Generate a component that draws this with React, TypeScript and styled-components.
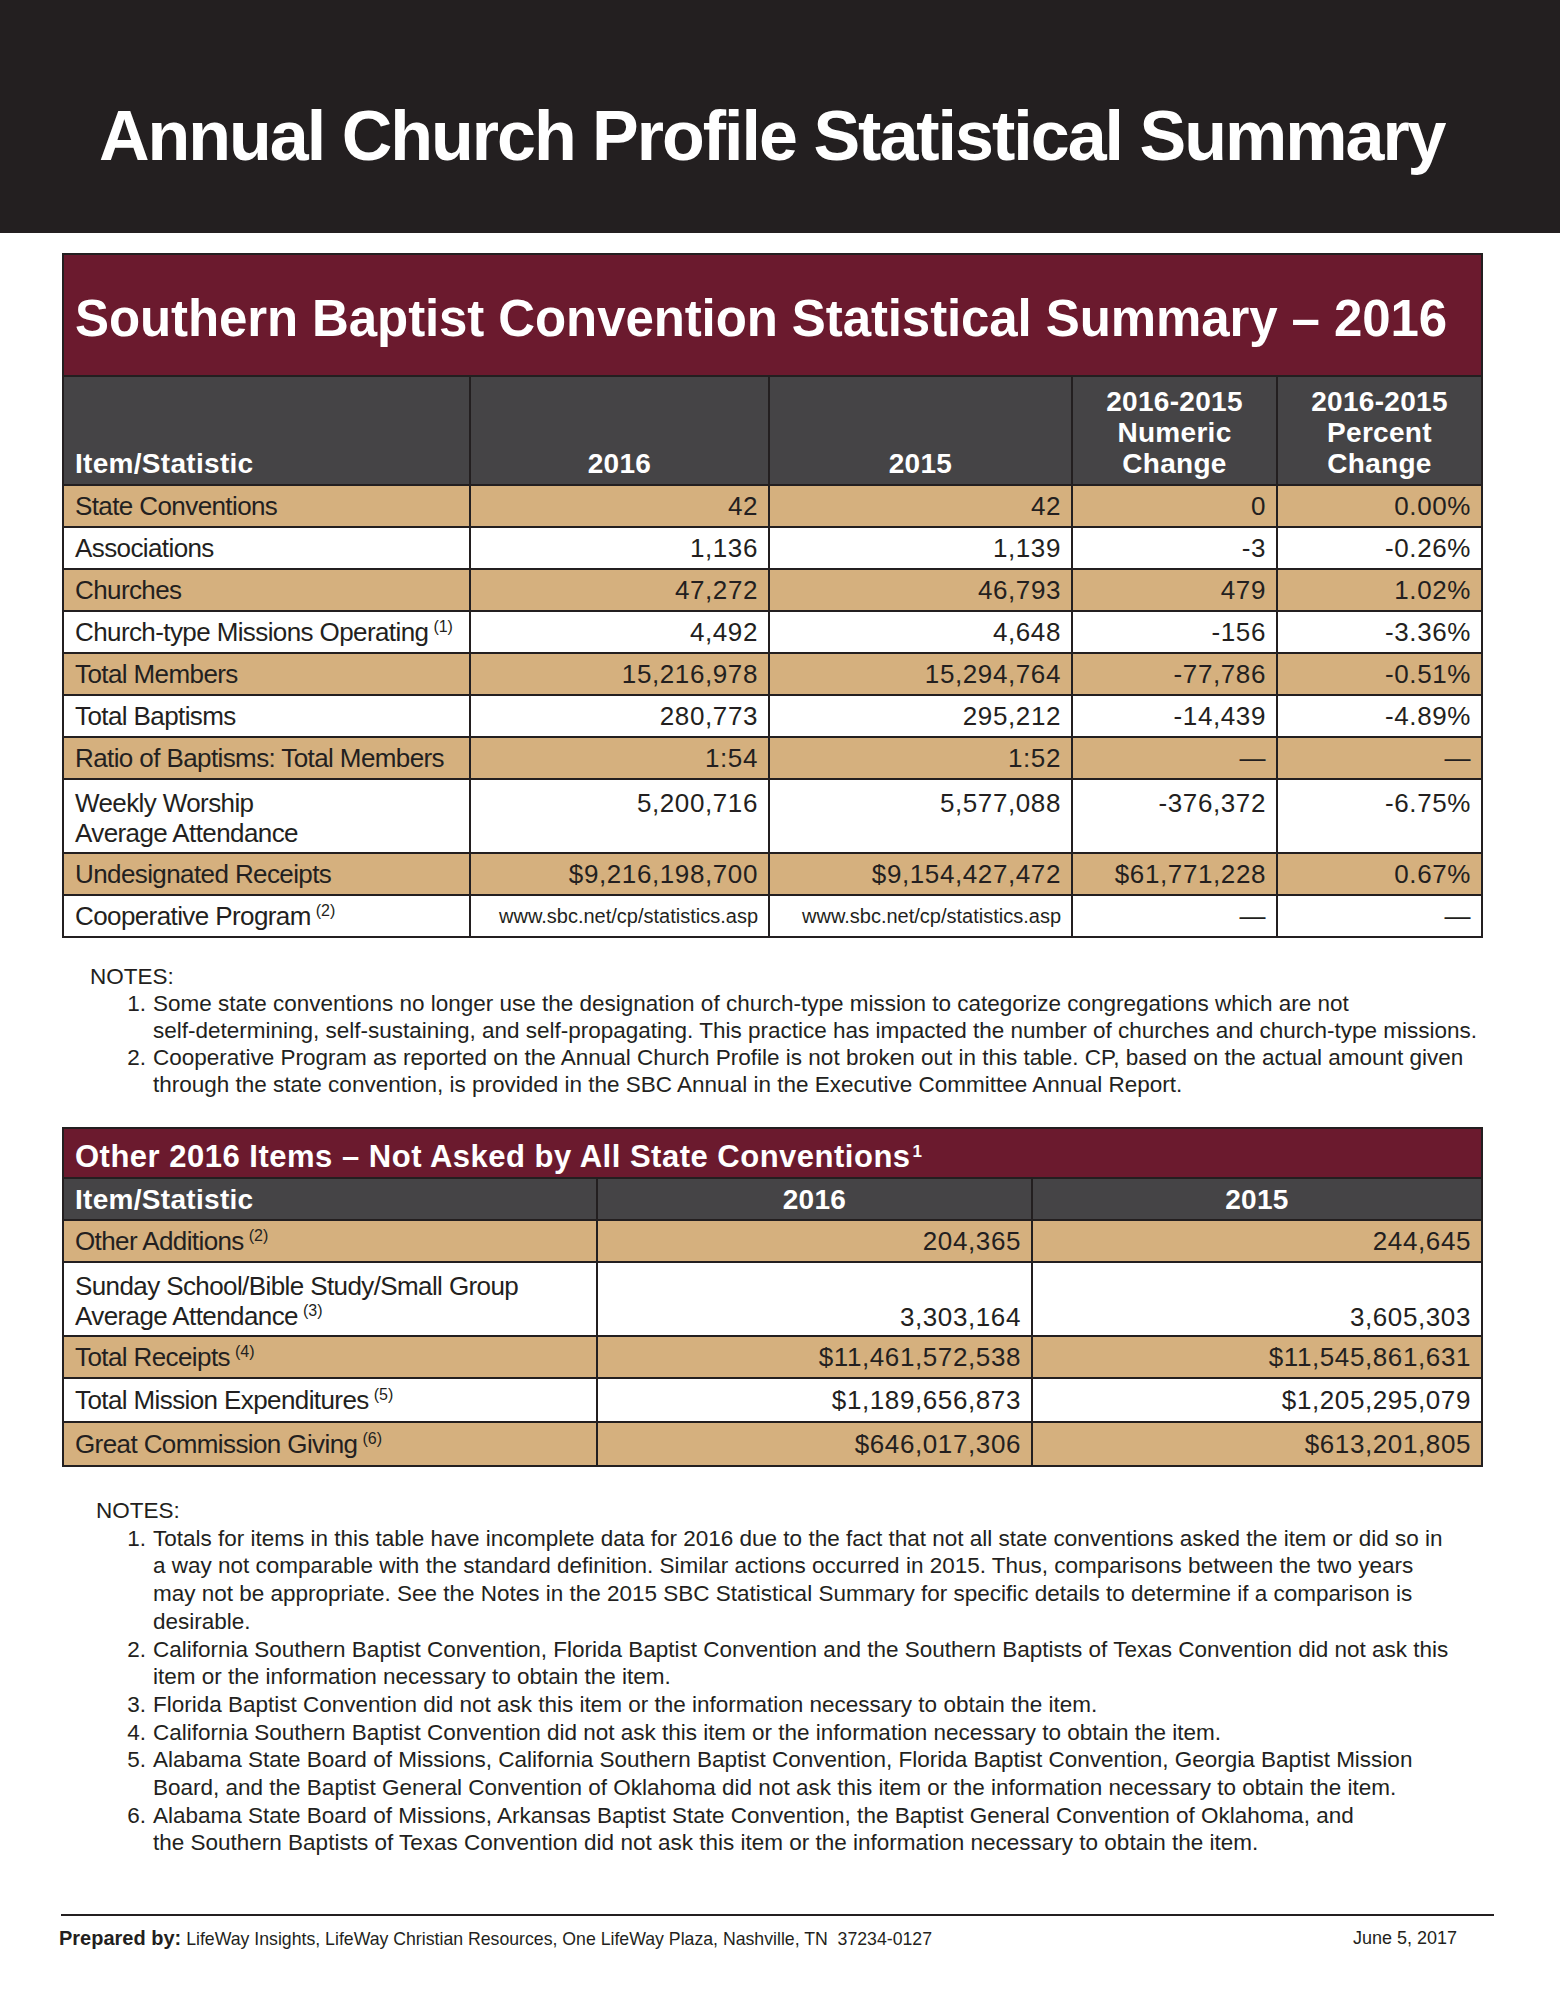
import React from "react";
import styled, { createGlobalStyle } from "styled-components";

const SANS = `"Liberation Sans", Arial, sans-serif`;

const INK = "#231f20";
const MAROON = "#6b1a2e";
const SLATE = "#454446";
const TAN = "#d5b07e";

const GlobalStyle = createGlobalStyle`
  html, body { margin: 0; padding: 0; background: #fff; }
  body { font-family: ${SANS}; color: ${INK}; }
  * { box-sizing: border-box; }
`;

const Page = styled.div`
  width: 1560px;
  height: 2000px;
  background: #fff;
  display: flex;
  flex-direction: column;
  padding-bottom: 51px;
`;

const Banner = styled.header`
  height: 233px;
  flex: none;
  background: ${INK};
  padding: 96px 0 0 99px;
`;

const BannerTitle = styled.h1`
  margin: 0;
  font-family: ${SANS};
  font-weight: 700;
  font-size: 70px;
  letter-spacing: -2px;
  line-height: 80px;
  color: #fff;
  white-space: nowrap;
`;

const Body = styled.main`
  padding: 20px 0 0 62px;
  display: flex;
  flex-direction: column;
`;

const Grid = styled.div<{ $cols: string; $rows: string; $top: number }>`
  display: grid;
  grid-template-columns: ${(p) => p.$cols};
  grid-template-rows: ${(p) => p.$rows};
  gap: 2px;
  padding: 2px;
  margin-top: ${(p) => p.$top}px;
  background: ${INK};
  width: 1421px;
`;

const TitleCell = styled.div<{ $size: number; $pad: number; $ls: number }>`
  grid-column: 1 / -1;
  background: ${MAROON};
  color: #fff;
  font-family: ${SANS};
  font-weight: 700;
  font-size: ${(p) => p.$size}px;
  letter-spacing: ${(p) => p.$ls}px;
  line-height: 1;
  display: flex;
  align-items: center;
  padding: ${(p) => p.$pad}px 0 0 11px;
  white-space: nowrap;
`;

const TitleSup = styled.span`
  font-size: 17px;
  vertical-align: 10px;
  margin-left: 2px;
`;

const HeadCell = styled.div<{ $align: "left" | "center"; $valign: "end" | "center" }>`
  background: ${SLATE};
  color: #fff;
  font-family: ${SANS};
  font-weight: 700;
  font-size: 28px;
  line-height: 31px;
  letter-spacing: 0.3px;
  display: flex;
  flex-direction: column;
  justify-content: ${(p) => (p.$valign === "end" ? "flex-end" : "center")};
  text-align: ${(p) => p.$align};
  padding: 0 11px ${(p) => (p.$valign === "end" ? 5 : 0)}px;
  white-space: nowrap;
`;

type VAlign = "center" | "start" | "end";

const Cell = styled.div<{ $tan: boolean; $num?: boolean; $valign: VAlign; $small?: boolean }>`
  background: ${(p) => (p.$tan ? TAN : "#fff")};
  color: ${INK};
  font-family: ${SANS};
  font-size: ${(p) => (p.$small ? 20 : 26)}px;
  line-height: 30px;
  letter-spacing: ${(p) => (p.$num ? (p.$small ? 0 : 0.6) : -0.6)}px;
  display: flex;
  flex-direction: column;
  justify-content: ${(p) =>
    p.$valign === "start" ? "flex-start" : p.$valign === "end" ? "flex-end" : "center"};
  text-align: ${(p) => (p.$num ? "right" : "left")};
  padding: ${(p) => (p.$valign === "start" ? 8 : 0)}px 10px
    ${(p) => (p.$valign === "end" ? 3 : 0)}px 11px;
  white-space: nowrap;
`;

const Sup = styled.span`
  font-size: 16px;
  letter-spacing: 0;
  vertical-align: 9px;
  line-height: 0;
  margin-left: 5px;
`;

const Notes = styled.section<{ $top: number; $lh: number }>`
  margin-top: ${(p) => p.$top}px;
  font-family: ${SANS};
  font-size: 22.5px;
  letter-spacing: 0;
  line-height: ${(p) => p.$lh}px;
  color: ${INK};
`;

const NotesLabel = styled.div<{ $indent: number }>`
  padding-left: ${(p) => p.$indent}px;
`;

const NoteItem = styled.div`
  display: grid;
  grid-template-columns: 91px auto;
`;

const NoteNum = styled.span`
  text-align: right;
  padding-right: 7px;
`;

const NoteLine = styled.span`
  display: block;
  white-space: nowrap;
`;

const Footer = styled.footer`
  margin: auto 0 0 61px;
  width: 1433px;
  border-top: 2px solid ${INK};
  padding: 12px 37px 0 0;
  display: flex;
  justify-content: space-between;
  font-family: ${SANS};
  font-size: 17.7px;
  line-height: 20px;
  color: ${INK};
`;

const FooterLeft = styled.span`
  margin-left: -2px;
  white-space: pre;
`;

const FooterStrong = styled.strong`
  font-weight: 700;
  font-size: 20px;
`;

const FooterDate = styled.span`
  font-size: 18px;
`;

type Row1 = {
  label: React.ReactNode;
  sup?: string;
  vals: string[];
  tall?: boolean;
  url?: boolean;
};

const rows1: Row1[] = [
  { label: "State Conventions", vals: ["42", "42", "0", "0.00%"] },
  { label: "Associations", vals: ["1,136", "1,139", "-3", "-0.26%"] },
  { label: "Churches", vals: ["47,272", "46,793", "479", "1.02%"] },
  { label: "Church-type Missions Operating", sup: "(1)", vals: ["4,492", "4,648", "-156", "-3.36%"] },
  { label: "Total Members", vals: ["15,216,978", "15,294,764", "-77,786", "-0.51%"] },
  { label: "Total Baptisms", vals: ["280,773", "295,212", "-14,439", "-4.89%"] },
  { label: "Ratio of Baptisms: Total Members", vals: ["1:54", "1:52", "—", "—"] },
  {
    label: (
      <>
        Weekly Worship
        <br />
        Average Attendance
      </>
    ),
    vals: ["5,200,716", "5,577,088", "-376,372", "-6.75%"],
    tall: true,
  },
  { label: "Undesignated Receipts", vals: ["$9,216,198,700", "$9,154,427,472", "$61,771,228", "0.67%"] },
  {
    label: "Cooperative Program",
    sup: "(2)",
    vals: ["www.sbc.net/cp/statistics.asp", "www.sbc.net/cp/statistics.asp", "—", "—"],
    url: true,
  },
];

type Row2 = { label: React.ReactNode; sup: string; vals: string[]; tall?: boolean };

const rows2: Row2[] = [
  { label: "Other Additions", sup: "(2)", vals: ["204,365", "244,645"] },
  {
    label: (
      <>
        Sunday School/Bible Study/Small Group
        <br />
        Average Attendance
      </>
    ),
    sup: "(3)",
    vals: ["3,303,164", "3,605,303"],
    tall: true,
  },
  { label: "Total Receipts", sup: "(4)", vals: ["$11,461,572,538", "$11,545,861,631"] },
  { label: "Total Mission Expenditures", sup: "(5)", vals: ["$1,189,656,873", "$1,205,295,079"] },
  { label: "Great Commission Giving", sup: "(6)", vals: ["$646,017,306", "$613,201,805"] },
];

const notes1: string[][] = [
  [
    "Some state conventions no longer use the designation of church-type mission to categorize congregations which are not",
    "self-determining, self-sustaining, and self-propagating. This practice has impacted the number of churches and church-type missions.",
  ],
  [
    "Cooperative Program as reported on the Annual Church Profile is not broken out in this table. CP, based on the actual amount given",
    "through the state convention, is provided in the SBC Annual in the Executive Committee Annual Report.",
  ],
];

const notes2: string[][] = [
  [
    "Totals for items in this table have incomplete data for 2016 due to the fact that not all state conventions asked the item or did so in",
    "a way not comparable with the standard definition. Similar actions occurred in 2015. Thus, comparisons between the two years",
    "may not be appropriate. See the Notes in the 2015 SBC Statistical Summary for specific details to determine if a comparison is",
    "desirable.",
  ],
  [
    "California Southern Baptist Convention, Florida Baptist Convention and the Southern Baptists of Texas Convention did not ask this",
    "item or the information necessary to obtain the item.",
  ],
  ["Florida Baptist Convention did not ask this item or the information necessary to obtain the item."],
  ["California Southern Baptist Convention did not ask this item or the information necessary to obtain the item."],
  [
    "Alabama State Board of Missions, California Southern Baptist Convention, Florida Baptist Convention, Georgia Baptist Mission",
    "Board, and the Baptist General Convention of Oklahoma did not ask this item or the information necessary to obtain the item.",
  ],
  [
    "Alabama State Board of Missions, Arkansas Baptist State Convention, the Baptist General Convention of Oklahoma, and",
    "the Southern Baptists of Texas Convention did not ask this item or the information necessary to obtain the item.",
  ],
];

function NotesBlock({
  items,
  top,
  lh,
  indent,
}: {
  items: string[][];
  top: number;
  lh: number;
  indent: number;
}) {
  return (
    <Notes $top={top} $lh={lh}>
      <NotesLabel $indent={indent}>NOTES:</NotesLabel>
      {items.map((lines, i) => (
        <NoteItem key={i}>
          <NoteNum>{i + 1}.</NoteNum>
          <span>
            {lines.map((l, j) => (
              <NoteLine key={j}>{l}</NoteLine>
            ))}
          </span>
        </NoteItem>
      ))}
    </Notes>
  );
}

export default function App() {
  return (
    <Page>
      <GlobalStyle />
      <Banner>
        <BannerTitle>Annual Church Profile Statistical Summary</BannerTitle>
      </Banner>
      <Body>
        <Grid
          $top={0}
          $cols="405px 297px 301px 203px 203px"
          $rows="120px 107px repeat(7, 40px) 72px 40px 40px"
        >
          <TitleCell $size={51} $pad={6} $ls={-0.1}>
            <span>Southern Baptist Convention Statistical Summary – 2016</span>
          </TitleCell>
          <HeadCell $align="left" $valign="end">Item/Statistic</HeadCell>
          <HeadCell $align="center" $valign="end">2016</HeadCell>
          <HeadCell $align="center" $valign="end">2015</HeadCell>
          <HeadCell $align="center" $valign="end">
            <span>2016-2015</span>
            <span>Numeric</span>
            <span>Change</span>
          </HeadCell>
          <HeadCell $align="center" $valign="end">
            <span>2016-2015</span>
            <span>Percent</span>
            <span>Change</span>
          </HeadCell>
          {rows1.map((r, i) => {
            const tan = i % 2 === 0;
            const va: VAlign = r.tall ? "start" : "center";
            return (
              <React.Fragment key={i}>
                <Cell $tan={tan} $valign={va}>
                  <span>
                    {r.label}
                    {r.sup && <Sup>{r.sup}</Sup>}
                  </span>
                </Cell>
                {r.vals.map((v, j) => (
                  <Cell key={j} $tan={tan} $num $valign={va} $small={r.url && j < 2}>
                    {v}
                  </Cell>
                ))}
              </React.Fragment>
            );
          })}
        </Grid>

        <NotesBlock items={notes1} top={25} lh={27} indent={28} />

        <Grid $top={29} $cols="532px 433px 448px" $rows="48px 40px 40px 72px 40px 42px 42px">
          <TitleCell $size={31} $pad={6} $ls={0.5}>
            <span>
              Other 2016 Items – Not Asked by All State Conventions<TitleSup>1</TitleSup>
            </span>
          </TitleCell>
          <HeadCell $align="left" $valign="center">Item/Statistic</HeadCell>
          <HeadCell $align="center" $valign="center">2016</HeadCell>
          <HeadCell $align="center" $valign="center">2015</HeadCell>
          {rows2.map((r, i) => {
            const tan = i % 2 === 0;
            return (
              <React.Fragment key={i}>
                <Cell $tan={tan} $valign={r.tall ? "start" : "center"}>
                  <span>
                    {r.label}
                    <Sup>{r.sup}</Sup>
                  </span>
                </Cell>
                {r.vals.map((v, j) => (
                  <Cell key={j} $tan={tan} $num $valign={r.tall ? "end" : "center"}>
                    {v}
                  </Cell>
                ))}
              </React.Fragment>
            );
          })}
        </Grid>

        <NotesBlock items={notes2} top={30} lh={27.7} indent={34} />
      </Body>
      <Footer>
        <FooterLeft>
          <FooterStrong>Prepared by:</FooterStrong> LifeWay Insights, LifeWay Christian Resources, One LifeWay
          Plaza, Nashville, TN  37234-0127
        </FooterLeft>
        <FooterDate>June 5, 2017</FooterDate>
      </Footer>
    </Page>
  );
}
